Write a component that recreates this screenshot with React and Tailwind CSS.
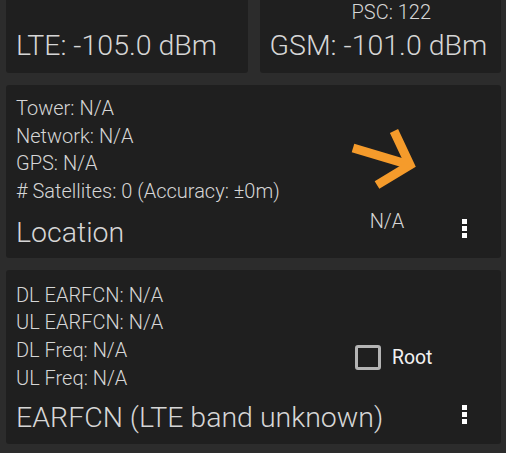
import React from "react";

function Kebab() {
  return (
    <div className="flex flex-col gap-[2px]">
      <div className="w-[5px] h-[5px] bg-white" />
      <div className="w-[5px] h-[5px] bg-white" />
      <div className="w-[5px] h-[5px] bg-white" />
    </div>
  );
}

function Arrow() {
  return (
    <svg width="94" height="70" viewBox="0 0 94 70" className="block">
      <g fill="none" stroke="#f59b2b" strokeWidth="9" strokeLinecap="butt" strokeLinejoin="miter" strokeMiterlimit="10">
        <path d="M13 24 L70 41" />
        <path d="M54 7 L70 41 L37 61" />
      </g>
    </svg>
  );
}

export default function App() {
  return (
    <div
      className="w-[506px] h-[453px] overflow-hidden bg-[#2c2c2c] pl-[6px] pr-[5px] text-[#d6d6d6] font-light"
      style={{ fontFamily: "Roboto, 'Noto Sans', sans-serif" }}
    >
      {/* top row */}
      <div className="grid grid-cols-2 gap-[12px]">
        <div className="h-[73px] bg-[#1f1f1f] rounded-b-[3px] pl-[10px] pt-[28px]">
          <div className="text-[28.5px] leading-[36px] whitespace-nowrap">LTE: -105.0 dBm</div>
        </div>
        <div className="h-[73px] bg-[#1f1f1f] rounded-b-[3px] flex flex-col">
          <div className="pl-[92px] pt-[1px] text-[20px] leading-[22px] whitespace-nowrap">PSC: 122</div>
          <div className="pl-[10px] mt-[5px] text-[28.5px] leading-[36px] whitespace-nowrap">GSM: -101.0 dBm</div>
        </div>
      </div>

      {/* location card */}
      <div className="mt-[12px] h-[173px] bg-[#1f1f1f] rounded-[3px] flex px-[10px]">
        <div className="flex-1 flex flex-col pt-[10px]">
          <div className="text-[20px] leading-[27.7px] whitespace-nowrap">
            <div>Tower: N/A</div>
            <div>Network: N/A</div>
            <div>GPS: N/A</div>
            <div># Satellites: 0 (Accuracy: ±0m)</div>
          </div>
          <div className="mt-[9.6px] text-[28.5px] leading-[36px]">Location</div>
        </div>
        <div className="w-[94px] flex flex-col items-center pt-[39px]">
          <Arrow />
          <div className="mt-[15.5px] text-[20px] leading-[22px]">N/A</div>
        </div>
        <div className="w-[57px] flex flex-col justify-end items-end pr-[24px] pb-[20px]">
          <Kebab />
        </div>
      </div>

      {/* earfcn card */}
      <div className="mt-[12px] h-[174px] bg-[#1f1f1f] rounded-[3px] flex flex-col px-[10px]">
        <div className="flex-1 flex">
          <div className="flex-1 pt-[11.7px] text-[20px] leading-[27.7px] whitespace-nowrap">
            <div>DL EARFCN: N/A</div>
            <div>UL EARFCN: N/A</div>
            <div>DL Freq: N/A</div>
            <div>UL Freq: N/A</div>
          </div>
          <div className="w-[136px] pt-[75px]">
            <div className="flex items-center">
              <div className="w-[26px] h-[25px] border-[3px] border-[#b4b4b4] rounded-[3px]" />
              <div className="ml-[11px] text-[19.4px] leading-[22px] text-[#f2f2f2] font-normal">Root</div>
            </div>
          </div>
        </div>
        <div className="h-[44px] flex items-start">
          <div className="flex-1 text-[28.5px] leading-[36px] whitespace-nowrap">EARFCN (LTE band unknown)</div>
          <div className="mt-[5px] pr-[24px]">
            <Kebab />
          </div>
        </div>
      </div>
    </div>
  );
}
